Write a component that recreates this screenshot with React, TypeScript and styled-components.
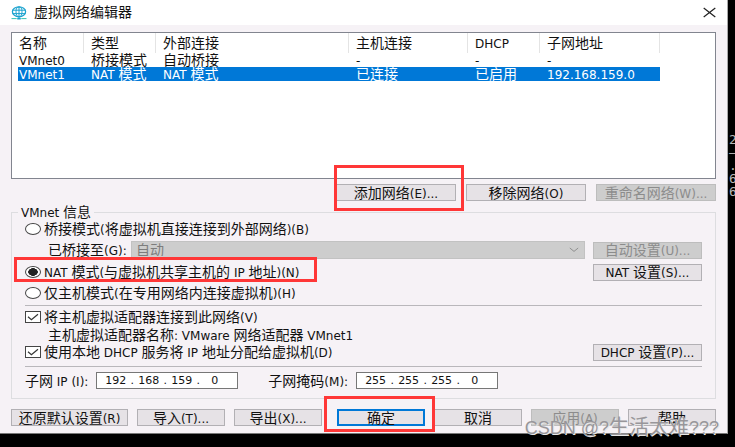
import React from "react";
import styled, { createGlobalStyle, css } from "styled-components";

const GlobalStyle = createGlobalStyle`
  *, *::before, *::after { box-sizing: border-box; }
  body {
    margin: 0;
    background: #000;
    color: #111;
    font-family: "Noto Sans CJK SC", "DejaVu Sans", sans-serif;
    font-size: 14px;
    line-height: 14px;
  }
`;

const Screen = styled.div`
  display: grid;
  grid-template-columns: minmax(0, 1fr) 7px;
  align-items: start;
  min-height: 100vh;
  position: relative;
  overflow: hidden;
`;

const Terminal = styled.pre`
  margin: 0;
  padding: 133px 0 0 1px;
  overflow: hidden;
  color: #b8b8b8;
  font: 13px/13px "DejaVu Sans Mono", monospace;
`;

const Dialog = styled.main`
  background: #f6f2f6;
  border-right: 1px solid #a9a9a9;
  border-bottom: 1px solid #777;
`;

const TitleBar = styled.header`
  display: flex;
  align-items: center;
  gap: 7px;
  height: 25px;
  padding: 0 11px;
  background: #fff;
`;

const Title = styled.h1`
  flex: 1;
  margin: 0;
  font-size: 14px;
  font-weight: 400;
  line-height: 14px;
  padding-bottom: 4px;
`;

const CloseButton = styled.button`
  display: flex;
  padding: 0;
  border: 0;
  background: none;
`;

const Body = styled.div`
  padding: 7px 11px 7px;
`;

const ListBox = styled.div`
  height: 147px;
  padding-left: 6px;
  border: 1px solid #82858f;
  background: #fff;
  overflow: hidden;
`;

const NetTable = styled.table`
  width: 642px;
  table-layout: fixed;
  border-collapse: separate;
  border-spacing: 0;
  white-space: nowrap;
`;

const HeadCell = styled.th`
  height: 20px;
  padding: 0 0 0 7px;
  border-right: 1px solid #e4e4e4;
  font-weight: 400;
  text-align: left;
  &:first-child { padding-left: 1px; }
`;

const Row = styled.tr<{ $selected?: boolean }>`
  ${(p) => p.$selected && css`
    background: #0078d7;
    color: #fff;
  `}
`;

const Cell = styled.td`
  height: 14px;
  padding: 0 0 0 7px;
  line-height: 14px;
  &:first-child { padding-left: 1px; }
`;

const TextRun = styled.span`
  display: block;
  padding-bottom: 2px;
  line-height: 12px;
`;

const Latin = styled.span`
  font-family: "DejaVu Sans", sans-serif;
  font-size: 12px;
  line-height: 0;
`;

const Actions = styled.div`
  display: flex;
  justify-content: flex-end;
  gap: 10px;
  padding: 5px 0 4px;
`;

const Button = styled.button<{ $width?: number; $primary?: boolean }>`
  display: flex;
  align-items: center;
  justify-content: center;
  width: ${(p) => (p.$width ? `${p.$width}px` : "100%")};
  height: 17px;
  padding: 0;
  border: ${(p) => (p.$primary ? "2px solid #0078d7" : "1px solid #b2b0b4")};
  background: #e6e2e6;
  color: #111;
  font: inherit;
  line-height: 14px;
  white-space: nowrap;
  &:disabled {
    border-color: #bdbdbd;
    background: #cdcdcd;
    color: #8c8c8c;
  }
`;

const Marked = styled.div`
  position: relative;
`;

const Highlight = styled.span<{ $inset: string }>`
  position: absolute;
  inset: ${(p) => p.$inset};
  z-index: 1;
  border: 3px solid #ff3737;
  pointer-events: none;
`;

const Group = styled.fieldset`
  min-width: 0;
  margin: 0;
  padding: 0 13px 9px;
  border: 1px solid #dddde0;
`;

const Legend = styled.legend`
  margin-left: -7px;
  padding: 0 3px;
  line-height: 14px;
`;

const Line = styled.div<{ $height: number }>`
  display: grid;
  grid-template-columns: minmax(0, 1fr) 109px;
  align-items: center;
  column-gap: 8px;
  height: ${(p) => p.$height}px;
  white-space: nowrap;
`;

const Choice = styled.label`
  display: flex;
  align-items: center;
  gap: 3px;
`;

const Radio = styled.input.attrs({ type: "radio" })`
  appearance: none;
  width: 16px;
  height: 12px;
  margin: 0;
  border: 1px solid #444;
  border-radius: 50%;
  background: #fff;
  &:checked {
    background: radial-gradient(ellipse 5px 4px, #222 90%, #fff 100%);
  }
`;

const Check = styled.input.attrs({ type: "checkbox" })`
  appearance: none;
  grid-area: 1 / 1;
  width: 16px;
  height: 12px;
  margin: 0;
  border: 1px solid #444;
  background: #fff;
`;

const CheckFrame = styled.span`
  display: grid;
  place-items: center;
  svg {
    grid-area: 1 / 1;
    pointer-events: none;
  }
`;

const Bridge = styled.div`
  display: grid;
  grid-template-columns: 83px minmax(0, 1fr);
  align-items: center;
  padding-left: 23px;
`;

const SelectFrame = styled.span`
  display: grid;
  align-items: center;
  svg {
    grid-area: 1 / 1;
    justify-self: end;
    margin-right: 6px;
  }
`;

const Select = styled.select`
  appearance: none;
  grid-area: 1 / 1;
  width: 100%;
  height: 18px;
  padding: 0 4px 2px;
  border: 1px solid #c2c2c2;
  border-radius: 0;
  background: #cdcdcd;
  color: #7d7d7d;
  font: inherit;
  line-height: 14px;
  opacity: 1;
`;

const Note = styled.div`
  display: flex;
  align-items: center;
  height: 17px;
  padding-left: 23px;
`;

const Divider = styled.hr<{ $space: string }>`
  height: 1px;
  margin: ${(p) => p.$space};
  border: 0;
  background: #b9b7bb;
`;

const Addresses = styled.div`
  display: flex;
  align-items: center;
  gap: 30px;
`;

const Address = styled.div`
  display: flex;
  align-items: center;
  gap: 8px;
  white-space: nowrap;
`;

const Octets = styled.div`
  display: flex;
  align-items: center;
  width: 142px;
  height: 17px;
  padding-left: 5px;
  border: 1px solid #777;
  background: #fff;
  font: 11px/14px "DejaVu Sans", sans-serif;
`;

const Octet = styled.input`
  width: 27px;
  height: 14px;
  padding: 0;
  border: 0;
  background: none;
  color: #111;
  font: inherit;
  text-align: center;
`;

const Dot = styled.span`
  width: 6px;
  text-align: center;
`;

const Footer = styled.footer`
  display: flex;
  justify-content: space-between;
  margin-top: 10px;
`;

const ButtonGroup = styled.div`
  display: flex;
  gap: 9px;
`;

const Watermark = styled.div`
  position: absolute;
  right: 16px;
  bottom: 7px;
  z-index: 2;
  color: #98969a;
  font: 18px/24px "Liberation Sans", sans-serif;
  text-shadow: 1px 1px 0 #e8e8e8;
  white-space: nowrap;
  pointer-events: none;
`;

const WatermarkName = styled.span`
  font-family: "Noto Sans CJK SC", sans-serif;
  font-size: 20px;
  line-height: 0;
`;

/** Sets Latin runs in the interface's Latin face, leaving Chinese runs as they are. */
function Text({ children }: { children: string }) {
  return (
    <TextRun>
      {children.split(/([\x20-\x7e]+)/).map((part, i) =>
        i % 2 ? <Latin key={i}>{part}</Latin> : part
      )}
    </TextRun>
  );
}

function GlobeIcon() {
  return (
    <svg width="16" height="14" viewBox="0 0 16 14" fill="none" stroke="#1ba3cf" aria-hidden="true">
      <ellipse cx="8" cy="5.8" rx="6.6" ry="4.9" strokeWidth="1.3" />
      <ellipse cx="8" cy="5.8" rx="3" ry="4.9" />
      <path d="M1.5 4.2h13M1.5 7.6h13M8 1v11" />
      <path d="M.5 12.6h5.2M10.3 12.6h5.2" stroke="#35c5b4" />
      <path d="M6.2 12.6h3.6" strokeWidth="1.8" />
    </svg>
  );
}

function CheckBox({ id }: { id: string }) {
  return (
    <CheckFrame>
      <Check id={id} defaultChecked />
      <svg width="12" height="8" viewBox="0 0 12 8" fill="none" stroke="#333" aria-hidden="true">
        <path d="M1 3.8 4.4 6.6 11 1.2" strokeWidth="1.2" />
      </svg>
    </CheckFrame>
  );
}

function IpField({ label, value }: { label: string; value: string[] }) {
  return (
    <Address role="group" aria-label={label}>
      <Text>{label}</Text>
      <Octets>
        {value.map((v, i) => (
          <React.Fragment key={i}>
            {i > 0 && <Dot>.</Dot>}
            <Octet defaultValue={v} aria-label={`${label} ${i + 1}`} />
          </React.Fragment>
        ))}
      </Octets>
    </Address>
  );
}

const columns = [
  { name: "名称", width: 66 },
  { name: "类型", width: 72 },
  { name: "外部连接", width: 193 },
  { name: "主机连接", width: 119 },
  { name: "DHCP", width: 72 },
  { name: "子网地址", width: 120 },
];

const networks = [
  ["VMnet0", "桥接模式", "自动桥接", "-", "-", "-"],
  ["VMnet1", "NAT 模式", "NAT 模式", "已连接", "已启用", "192.168.159.0"],
];

export default function App() {
  return (
    <>
      <GlobalStyle />
      <Screen>
        <Dialog>
          <TitleBar>
            <GlobeIcon />
            <Title>虚拟网络编辑器</Title>
            <CloseButton aria-label="关闭">
              <svg width="13" height="11" viewBox="0 0 13 11" fill="none" stroke="#222" aria-hidden="true">
                <path d="M.7 1 12.3 10M12.3 1 .7 10" strokeWidth="1.2" />
              </svg>
            </CloseButton>
          </TitleBar>
          <Body>
            <ListBox>
              <NetTable>
                <colgroup>
                  {columns.map((c) => <col key={c.name} width={c.width} />)}
                </colgroup>
                <thead>
                  <tr>
                    {columns.map((c) => (
                      <HeadCell key={c.name} scope="col"><Text>{c.name}</Text></HeadCell>
                    ))}
                  </tr>
                </thead>
                <tbody>
                  {networks.map((row, r) => (
                    <Row key={row[0]} $selected={r === 1}>
                      {row.map((v, i) => <Cell key={i}><Text>{v}</Text></Cell>)}
                    </Row>
                  ))}
                </tbody>
              </NetTable>
            </ListBox>

            <Actions>
              <Marked>
                <Button $width={120}><Text>添加网络(E)...</Text></Button>
                <Highlight $inset="-19px -8px -10px -2px" />
              </Marked>
              <Button $width={120}><Text>移除网络(O)</Text></Button>
              <Button $width={120} disabled><Text>重命名网络(W)...</Text></Button>
            </Actions>

            <Group>
              <Legend><Text>VMnet 信息</Text></Legend>
              <Line $height={20}>
                <Choice>
                  <Radio name="mode" />
                  <Text>桥接模式(将虚拟机直接连接到外部网络)(B)</Text>
                </Choice>
              </Line>
              <Line $height={22}>
                <Bridge>
                  <label htmlFor="bridge"><Text>已桥接至(G):</Text></label>
                  <SelectFrame>
                    <Select id="bridge" disabled><option>自动</option></Select>
                    <svg width="10" height="6" viewBox="0 0 10 6" fill="none" stroke="#8f8f8f" aria-hidden="true">
                      <path d="M.8 1 5 4.4 9.2 1" />
                    </svg>
                  </SelectFrame>
                </Bridge>
                <Button disabled><Text>自动设置(U)...</Text></Button>
              </Line>
              <Marked>
                <Line $height={22}>
                  <Choice>
                    <Radio name="mode" defaultChecked />
                    <Text>NAT 模式(与虚拟机共享主机的 IP 地址)(N)</Text>
                  </Choice>
                  <Button><Text>NAT 设置(S)...</Text></Button>
                </Line>
                <Highlight $inset="-4px 385px 1px -11px" />
              </Marked>
              <Line $height={20}>
                <Choice>
                  <Radio name="mode" />
                  <Text>仅主机模式(在专用网络内连接虚拟机)(H)</Text>
                </Choice>
              </Line>
              <Divider $space="2px 0" />
              <Line $height={18}>
                <Choice htmlFor="adapter">
                  <CheckBox id="adapter" />
                  <Text>将主机虚拟适配器连接到此网络(V)</Text>
                </Choice>
              </Line>
              <Note><Text>主机虚拟适配器名称: VMware 网络适配器 VMnet1</Text></Note>
              <Line $height={18}>
                <Choice htmlFor="dhcp">
                  <CheckBox id="dhcp" />
                  <Text>使用本地 DHCP 服务将 IP 地址分配给虚拟机(D)</Text>
                </Choice>
                <Button><Text>DHCP 设置(P)...</Text></Button>
              </Line>
              <Divider $space="5px 0" />
              <Addresses>
                <IpField label="子网 IP (I):" value={["192", "168", "159", "0"]} />
                <IpField label="子网掩码(M):" value={["255", "255", "255", "0"]} />
              </Addresses>
            </Group>

            <Footer>
              <ButtonGroup>
                <Button $width={117}><Text>还原默认设置(R)</Text></Button>
                <Button $width={88}><Text>导入(T)...</Text></Button>
                <Button $width={88}><Text>导出(X)...</Text></Button>
              </ButtonGroup>
              <ButtonGroup>
                <Marked>
                  <Button $width={88} $primary><Text>确定</Text></Button>
                  <Highlight $inset="-13px -10px -6px -13px" />
                </Marked>
                <Button $width={88}><Text>取消</Text></Button>
                <Button $width={88} disabled><Text>应用(A)</Text></Button>
                <Button $width={88}><Text>帮助</Text></Button>
              </ButtonGroup>
            </Footer>
          </Body>
        </Dialog>
        <Terminal aria-hidden="true">{"2\n—\n.\n6\n6"}</Terminal>
        <Watermark>CSDN @?<WatermarkName>生活太难</WatermarkName>???</Watermark>
      </Screen>
    </>
  );
}
